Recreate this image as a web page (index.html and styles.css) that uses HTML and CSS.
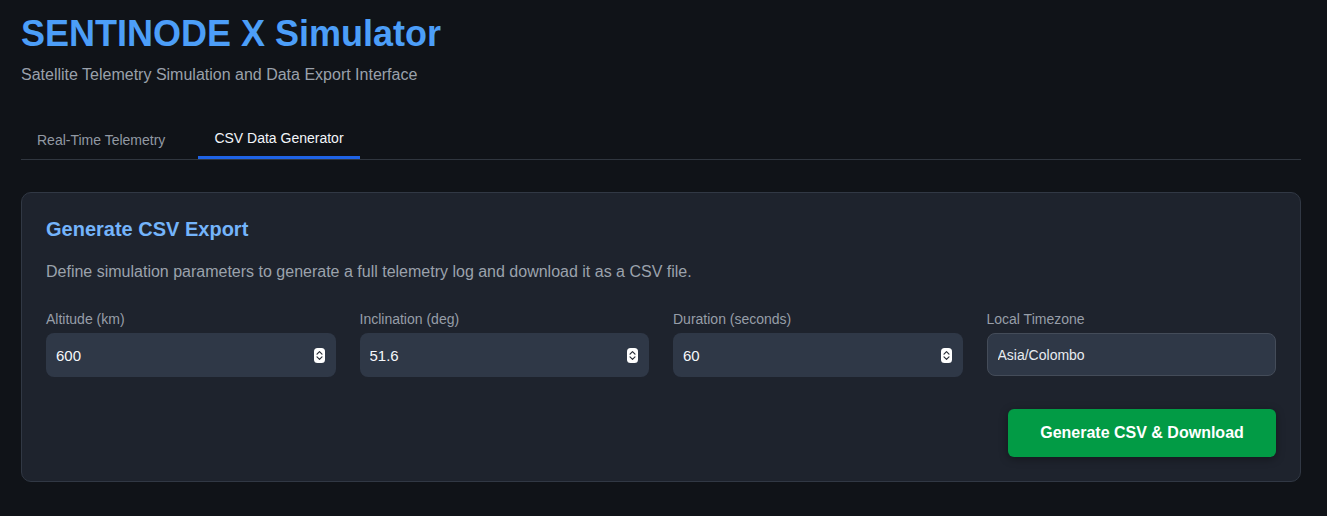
FILE: index.html
```html
<!DOCTYPE html>
<html lang="en">
<head>
<meta charset="utf-8">
<title>SENTINODE X Simulator</title>
<link rel="stylesheet" href="styles.css">
</head>
<body>
<div class="app">
  <header class="header">
    <h1 class="title">SENTINODE X Simulator</h1>
    <p class="subtitle">Satellite Telemetry Simulation and Data Export Interface</p>
  </header>

  <nav class="tabs">
    <button class="tab">Real-Time Telemetry</button>
    <button class="tab tab-active">CSV Data Generator</button>
  </nav>

  <section class="card">
    <h2 class="card-title">Generate CSV Export</h2>
    <p class="card-desc">Define simulation parameters to generate a full telemetry log and download it as a CSV file.</p>

    <div class="fields">
      <label class="field">
        <span class="field-label">Altitude (km)</span>
        <span class="input-wrap">
          <input class="input input-number" type="text" value="600">
          <svg class="spinner" width="11" height="15" viewBox="0 0 11 15"><rect x="0" y="0" width="11" height="15" rx="3.5" fill="#ffffff"/><path d="M3 6.2 L5.5 3.7 L8 6.2" stroke="#2a2f38" stroke-width="1.2" fill="none" stroke-linecap="round" stroke-linejoin="round"/><path d="M3 8.8 L5.5 11.3 L8 8.8" stroke="#2a2f38" stroke-width="1.2" fill="none" stroke-linecap="round" stroke-linejoin="round"/></svg>
        </span>
      </label>
      <label class="field">
        <span class="field-label">Inclination (deg)</span>
        <span class="input-wrap">
          <input class="input input-number" type="text" value="51.6">
          <svg class="spinner" width="11" height="15" viewBox="0 0 11 15"><rect x="0" y="0" width="11" height="15" rx="3.5" fill="#ffffff"/><path d="M3 6.2 L5.5 3.7 L8 6.2" stroke="#2a2f38" stroke-width="1.2" fill="none" stroke-linecap="round" stroke-linejoin="round"/><path d="M3 8.8 L5.5 11.3 L8 8.8" stroke="#2a2f38" stroke-width="1.2" fill="none" stroke-linecap="round" stroke-linejoin="round"/></svg>
        </span>
      </label>
      <label class="field">
        <span class="field-label">Duration (seconds)</span>
        <span class="input-wrap">
          <input class="input input-number" type="text" value="60">
          <svg class="spinner" width="11" height="15" viewBox="0 0 11 15"><rect x="0" y="0" width="11" height="15" rx="3.5" fill="#ffffff"/><path d="M3 6.2 L5.5 3.7 L8 6.2" stroke="#2a2f38" stroke-width="1.2" fill="none" stroke-linecap="round" stroke-linejoin="round"/><path d="M3 8.8 L5.5 11.3 L8 8.8" stroke="#2a2f38" stroke-width="1.2" fill="none" stroke-linecap="round" stroke-linejoin="round"/></svg>
        </span>
      </label>
      <label class="field">
        <span class="field-label">Local Timezone</span>
        <span class="input-wrap">
          <input class="input input-text" type="text" value="Asia/Colombo" readonly>
        </span>
      </label>
    </div>

    <div class="actions">
      <button class="btn-primary">Generate CSV &amp; Download</button>
    </div>
  </section>
</div>
</body>
</html>
```

FILE: styles.css
```css
* {
  box-sizing: border-box;
}

html, body {
  margin: 0;
  padding: 0;
  background: #101318;
}

body {
  font-family: "Liberation Sans", Arial, Helvetica, sans-serif;
  color: #e6edf3;
}

.app {
  width: 1280px;
  margin-left: 21px;
  padding-top: 14px;
}

.title {
  margin: 0;
  font-size: 36px;
  line-height: 40px;
  font-weight: 700;
  color: #4c9ef8;
}

.subtitle {
  margin: 11px 0 0;
  font-size: 16px;
  line-height: 20px;
  color: #9aa1ab;
}

.tabs {
  display: flex;
  gap: 17px;
  margin-top: 36px;
  border-bottom: 1px solid #30363f;
}

.tab {
  font-family: inherit;
  font-size: 14px;
  line-height: 18px;
  color: #9299a3;
  background: none;
  border: 0;
  border-bottom: 3px solid transparent;
  padding: 10px 16px 7px;
  cursor: pointer;
}

.tab-active {
  color: #f3f6fa;
  border-bottom-color: #1f63e6;
  padding-top: 8px;
  padding-bottom: 9px;
}

.card {
  margin-top: 32px;
  background: #1e232d;
  border: 1px solid #313844;
  border-radius: 10px;
  padding: 24px;
}

.card-title {
  margin: 0;
  font-size: 20px;
  line-height: 24px;
  font-weight: 700;
  color: #74b4fb;
}

.card-desc {
  margin: 21px 0 0;
  font-size: 16px;
  line-height: 20px;
  color: #9ba2ac;
}

.fields {
  display: grid;
  grid-template-columns: repeat(4, 1fr);
  gap: 24px;
  margin-top: 28px;
}

.field {
  display: flex;
  flex-direction: column;
  gap: 5px;
}

.field-label {
  font-size: 14px;
  line-height: 18px;
  color: #979ea8;
}

.input-wrap {
  position: relative;
  display: block;
}

.input {
  display: block;
  width: 100%;
  height: 44px;
  font-family: inherit;
  color: #f5f7fa;
  background: #2f3847;
  border-radius: 8px;
  outline: none;
}

.input-number {
  border: 0;
  font-size: 15px;
  padding: 0 30px 0 10px;
}

.input-text {
  height: 43px;
  border: 1px solid #444c59;
  font-size: 14px;
  padding: 0 10px;
  color: #e8ecf1;
}

.spinner {
  position: absolute;
  right: 11px;
  top: 15px;
}

.actions {
  display: flex;
  justify-content: flex-end;
  margin-top: 32px;
}

.btn-primary {
  font-family: inherit;
  font-size: 16px;
  line-height: 20px;
  font-weight: 700;
  color: #ffffff;
  background: #029b45;
  border: 0;
  border-radius: 6px;
  width: 268px;
  height: 48px;
  padding: 0;
  box-shadow: 0 2px 8px rgba(0, 0, 0, 0.35);
  cursor: pointer;
}
```
